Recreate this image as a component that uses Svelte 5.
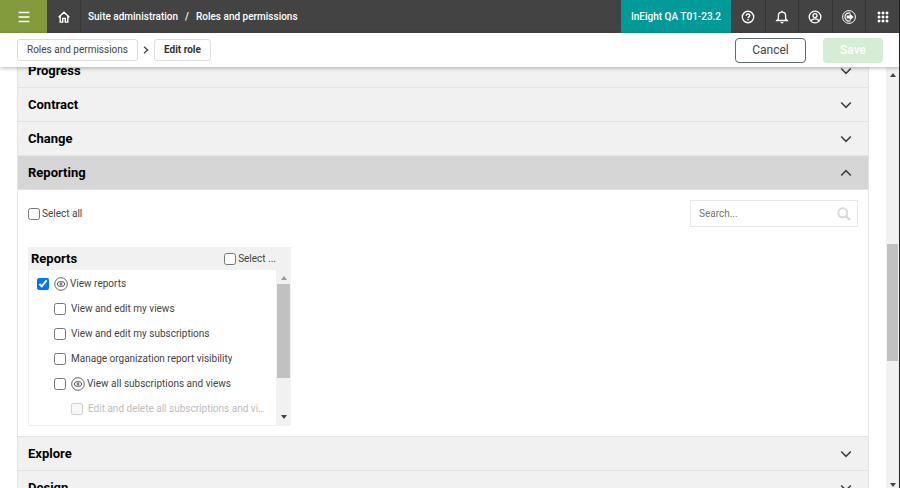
<script>
  const before = ['Progress', 'Contract', 'Change'];
  const after = ['Explore', 'Design'];
  let search = $state('');
  let permissions = $state([
    { id: 'view', label: 'View reports', level: 0, eye: true, checked: true },
    { id: 'my-views', label: 'View and edit my views', level: 1, checked: false },
    { id: 'my-subs', label: 'View and edit my subscriptions', level: 1, checked: false },
    { id: 'visibility', label: 'Manage organization report visibility', level: 1, checked: false },
    { id: 'all', label: 'View all subscriptions and views', level: 1, eye: true, checked: false },
    { id: 'edit-all', label: 'Edit and delete all subscriptions and views', level: 2, checked: false, disabled: true }
  ]);
</script>

{#snippet chevron(up)}
  <svg class="chevron" viewBox="0 0 12 8" aria-hidden="true">
    <path d={up ? 'M1.2 6.5 6 1.7 10.8 6.5' : 'M1.2 1.5 6 6.3 10.8 1.5'} />
  </svg>
{/snippet}

{#snippet section(name)}
  <button class="section" aria-expanded="false"><span>{name}</span>{@render chevron(false)}</button>
{/snippet}

{#snippet arrow(up)}
  <svg class="arrow" viewBox="0 0 6 4" aria-hidden="true"><path d={up ? 'M0 4 3 0 6 4z' : 'M0 0 3 4 6 0z'} /></svg>
{/snippet}

<div class="app">
  <header class="topbar">
    <button class="menu" aria-label="Menu">
      <svg width="12" height="12" viewBox="0 0 12 12"><path d="M.5 1.5h11M.5 6h11M.5 10.5h11" stroke="#fff" stroke-width="1.3" fill="none" /></svg>
    </button>
    <button class="home" aria-label="Home">
      <svg width="12" height="12" viewBox="0 0 12 12" fill="none" stroke="#fff" stroke-width="1.4"><path d="M.6 6.2 6 1.3l5.4 4.9M2.2 5.2v5.9h2.5V7.4h2.6v3.7h2.5V5.2" /></svg>
    </button>
    <nav class="crumbs" aria-label="Location">
      <a href="#suite">Suite administration</a><span>/</span><a href="#roles">Roles and permissions</a>
    </nav>
    <button class="tenant">InEight QA T01-23.2</button>
    <div class="tools">
      <button aria-label="Help">
        <svg width="14" height="14" viewBox="0 0 14 14" fill="none" stroke="#fff" stroke-width="1.4"><circle cx="7" cy="7" r="5.7" /><path d="M5.2 5.8C5.2 4.5 6 4 7 4s1.8.6 1.8 1.6c0 1.3-1.8 1.3-1.8 2.6M7 9v1.4" /></svg>
      </button>
      <button aria-label="Notifications">
        <svg width="14" height="14" viewBox="0 0 14 14" fill="none" stroke="#fff" stroke-width="1.3"><path d="M1.8 10.5h10.4L10.6 8.7V5.7C10.6 3.5 9 2.2 7 2.2S3.4 3.5 3.4 5.7v3zM7 .8v1.4M5.6 12.6h2.8" /></svg>
      </button>
      <button aria-label="Account">
        <svg width="14" height="14" viewBox="0 0 14 14" fill="none" stroke="#fff" stroke-width="1.3"><circle cx="7" cy="7" r="5.8" /><circle cx="7" cy="5.6" r="2" /><path d="M3 11c.6-1.6 2-2.2 4-2.2s3.4.6 4 2.2" /></svg>
      </button>
      <button aria-label="Sign out">
        <svg width="14" height="14" viewBox="0 0 14 14" fill="none" stroke="#fff"><circle cx="7" cy="7" r="6.4" stroke-width="1" /><path d="M8.6 3.2A4.1 4.1 0 1 0 8.6 10.8" stroke-width="1.2" /><path d="M4.7 5.6h3V3.5L11.6 7l-3.9 3.5V8.4h-3z" fill="#fff" stroke="none" /></svg>
      </button>
      <button aria-label="Apps">
        <svg width="12" height="12" viewBox="0 0 12 12" fill="#fff"><path d="M1 1h2v2H1zM5 1h2v2H5zM9 1h2v2H9zM1 5h2v2H1zM5 5h2v2H5zM9 5h2v2H9zM1 9h2v2H1zM5 9h2v2H5zM9 9h2v2H9z" stroke="#fff" stroke-width=".6" /></svg>
      </button>
    </div>
  </header>

  <div class="actionbar">
    <a class="step" href="#roles">Roles and permissions</a>
    <svg class="sep" width="6" height="8" viewBox="0 0 6 8" aria-hidden="true"><path d="M1 .8 4.6 4 1 7.2" fill="none" stroke="#444" stroke-width="1.3" /></svg>
    <a class="step current" href="#edit" aria-current="page">Edit role</a>
    <button class="cancel">Cancel</button>
    <button class="save" disabled>Save</button>
  </div>

  <div class="viewport">
    <main>
      {#each before as name}{@render section(name)}{/each}
      <button class="section open" aria-expanded="true"><span>Reporting</span>{@render chevron(true)}</button>
      <div class="body">
        <div class="filters">
          <label class="check"><input type="checkbox" /><span>Select all</span></label>
          <div class="search">
            <input type="text" placeholder="Search..." aria-label="Search" bind:value={search} />
            <svg width="14" height="14" viewBox="0 0 14 14" fill="none" stroke="#d9d9d9" stroke-width="2" aria-hidden="true"><circle cx="5.8" cy="5.8" r="4.5" /><path d="m9.2 9.2 3.8 3.8" /></svg>
          </div>
        </div>
        <section class="panel">
          <div class="panel-head">
            <h2>Reports</h2>
            <label class="check"><input type="checkbox" /><span>Select ...</span></label>
          </div>
          <div class="panel-body">
            <ul>
              {#each permissions as item (item.id)}
                <li class="level-{item.level}" class:disabled={item.disabled}>
                  <input id={item.id} type="checkbox" bind:checked={item.checked} disabled={item.disabled} />
                  <label for={item.id}>
                    {#if item.eye}
                      <svg width="14" height="14" viewBox="0 0 14 14" fill="none" stroke="#555" aria-hidden="true"><circle cx="7" cy="7" r="6.3" stroke-width=".9" /><path d="M4.6 4.8h4.8L10.8 7 9.4 9.2H4.6L3.2 7z" stroke-width="1" /><circle cx="7" cy="7" r="1" stroke-width="1" /></svg>
                    {/if}
                    <span>{item.label}</span>
                  </label>
                </li>
              {/each}
            </ul>
            <div class="bar inner" aria-hidden="true">
              {@render arrow(true)}
              <div class="track"><div class="thumb"></div></div>
              {@render arrow(false)}
            </div>
          </div>
        </section>
      </div>
      {#each after as name}{@render section(name)}{/each}
    </main>
    <div class="bar outer" aria-hidden="true">
      {@render arrow(true)}
      <div class="track"><div class="thumb"></div></div>
      {@render arrow(false)}
    </div>
  </div>
</div>

<style>
  .app {
    display: flex;
    flex-direction: column;
    height: 100vh;
    box-sizing: border-box;
    border-right: 1px solid #222;
    overflow: hidden;
    background: #fff;
    color: #444;
    font: 10px/16px Roboto, sans-serif;
  }
  .app * { box-sizing: border-box; }
  button { font: inherit; border: 0; padding: 0; color: inherit; cursor: pointer; }
  a { color: inherit; text-decoration: none; }
  svg { flex: none; display: block; }

  .topbar { display: flex; flex: none; height: 33px; background: #434343; color: #fff; }
  .topbar button { display: flex; align-items: center; justify-content: center; background: none; }
  .topbar .menu { width: 47px; background: #829b3d; }
  .topbar .home { width: 34px; border-right: 1px solid #383838; }
  .crumbs { display: flex; flex: 1; align-items: center; gap: 7px; padding-left: 7px; font-weight: 500; }
  .topbar .tenant { width: 110px; background: #009a98; font-weight: 500; }
  .tools { display: flex; width: 168px; }
  .tools button { flex: 1; border-left: 1px solid #353535; }

  .actionbar {
    display: flex;
    flex: none;
    align-items: center;
    height: 34px;
    padding: 0 16px 0 17px;
    background: #fff;
    box-shadow: 0 1px 4px rgba(0, 0, 0, 0.3);
    z-index: 1;
  }
  .step { height: 22px; padding: 2px 9px; border: 1px solid #ddd; border-radius: 3px; }
  .step.current { color: #333; font-weight: 700; }
  .sep { margin: 0 5px; }
  .cancel, .save { height: 25px; border-radius: 4px; font-size: 12px; }
  .cancel { width: 71px; margin-left: auto; border: 1px solid #616b6b; background: #fff; }
  .save { width: 60px; margin-left: 17px; background: #d5edd5; color: #fff; font-weight: 500; }

  .viewport { display: flex; flex: 1; min-height: 0; overflow: hidden; }
  main { flex: 1; align-self: flex-start; margin: -13px 17px 0; border: 1px solid #e4e4e4; border-width: 0 1px; }
  .section {
    display: flex;
    align-items: center;
    justify-content: space-between;
    width: 100%;
    height: 34px;
    padding: 0 16px 0 10px;
    border-bottom: 1px solid #e4e4e4;
    background: #f1f1f1;
    color: #000;
    font-size: 13px;
    font-weight: 700;
  }
  .section.open { background: #d6d6d6; }
  .chevron { width: 12px; height: 8px; fill: none; stroke: #3f3f3f; stroke-width: 1.6; }
  .body { height: 247px; padding: 10px; border-bottom: 1px solid #e4e4e4; }
  .filters { display: flex; align-items: center; justify-content: space-between; height: 27px; }
  .check { display: flex; align-items: center; gap: 2px; }
  input[type='checkbox'] { flex: none; width: 12px; height: 12px; margin: 0; }
  .search { display: flex; align-items: center; width: 168px; height: 27px; padding: 0 6px 0 8px; border: 1px solid #e8e8e8; }
  .search input { flex: 1; min-width: 0; padding: 0; border: 0; outline: 0; background: none; color: #555; font: inherit; }
  .search input::placeholder { color: #757575; opacity: 1; }

  .panel { width: 263px; margin-top: 20px; }
  .panel-head { display: flex; align-items: center; justify-content: space-between; height: 23px; padding: 0 15px 0 3px; background: #f1f1f1; }
  h2 { margin: 0; color: #000; font-size: 13px; font-weight: 700; }
  .panel-body { display: flex; height: 156px; border: 1px solid #f1f1f1; border-width: 0 0 1px 1px; }
  ul { flex: 1; min-width: 0; margin: 0; padding: 1px 8px 0 0; list-style: none; }
  li { display: flex; align-items: center; gap: 5px; height: 25px; }
  .level-0 { padding-left: 8px; }
  .level-1 { padding-left: 25px; }
  .level-2 { padding-left: 42px; }
  li label { display: flex; flex: 1; align-items: center; gap: 2px; min-width: 0; }
  li label span { overflow: hidden; text-overflow: ellipsis; white-space: nowrap; }
  .disabled { color: #bdbdbd; }

  .bar { display: flex; flex: none; flex-direction: column; align-items: center; background: #f1f1f1; }
  .arrow { width: 6px; height: 4px; fill: #444; }
  .track { flex: 1; width: 100%; padding: 0 1px; }
  .thumb { background: #c1c1c1; }
  .inner { width: 15px; padding: 6px 0; gap: 4px; }
  .inner .arrow:first-child { fill: #999; }
  .inner .thumb { height: 74%; }
  .outer { width: 13px; padding: 6px 0 1px; gap: 4px; }
  .outer .track { display: flex; flex-direction: column; padding-top: 163px; }
  .outer .thumb { height: 117px; }
</style>
